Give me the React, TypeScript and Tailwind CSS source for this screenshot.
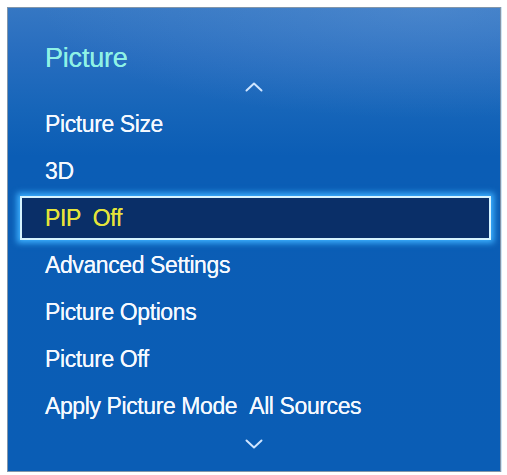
const items = [
  { label: 'Picture Size' },
  { label: '3D' },
  { label: 'PIP\u00a0\u00a0Off', selected: true },
  { label: 'Advanced Settings' },
  { label: 'Picture Options' },
  { label: 'Picture Off' },
  { label: 'Apply Picture Mode\u00a0\u00a0All Sources' },
];

function Chevron({ up }: { up?: boolean }) {
  return (
    <svg width="18" height="10" viewBox="0 0 18 10" className="block">
      <path
        d={up ? 'M1.5 8.5 L9 1.5 L16.5 8.5' : 'M1.5 1.5 L9 8.5 L16.5 1.5'}
        fill="none"
        stroke="#cfe5ff"
        strokeWidth="2"
        strokeLinecap="round"
        strokeLinejoin="round"
      />
    </svg>
  );
}

export default function App() {
  return (
    <div className="w-[507px] h-[475px] bg-white pt-[7px] pl-[7px] font-['Liberation_Sans',Arial,sans-serif]">
      <div className="relative w-[494px] h-[465px] border border-[#8296aa] shadow-[1px_0_0_#cfe4f3] bg-[linear-gradient(180deg,#3577c3_0%,#276dbf_10%,#1665b9_22%,#0b5db5_32%,#0a5db5_100%)] overflow-hidden">
        <div className="absolute inset-x-0 top-0 h-[120px] bg-[radial-gradient(ellipse_at_85%_0%,rgba(110,160,220,0.35),rgba(110,160,220,0)_65%)]" />
        <div className="relative flex flex-col [text-shadow:0_0_0.6px_currentColor]">
          <div className="pt-[35px] pl-[37px] h-[65px] text-[27px] leading-[30px] text-[#8ef2e6] tracking-[-0.2px]">
            Picture
          </div>
          <div className="flex justify-center pt-[9px] h-[27px]">
            <Chevron up />
          </div>
          {items.map((item) =>
            item.selected ? (
              <div key={item.label} className="h-[47px] flex items-center pl-[12px] pr-[9px]">
                <div className="w-full h-[44px] flex items-center pl-[23px] border-2 border-[#d6f4ff] bg-[#0a2f68] shadow-[0_0_6px_3px_#3cb0ff] text-[23px] leading-[26px] tracking-[-0.4px] text-[#e4e43a]">
                  {item.label}
                </div>
              </div>
            ) : (
              <div
                key={item.label}
                className="h-[47px] flex items-center pl-[37px] text-[23px] leading-[26px] tracking-[-0.4px] text-[#f5f9ff]"
              >
                {item.label}
              </div>
            )
          )}
          <div className="flex justify-center pt-[10px]">
            <Chevron />
          </div>
        </div>
      </div>
    </div>
  );
}
